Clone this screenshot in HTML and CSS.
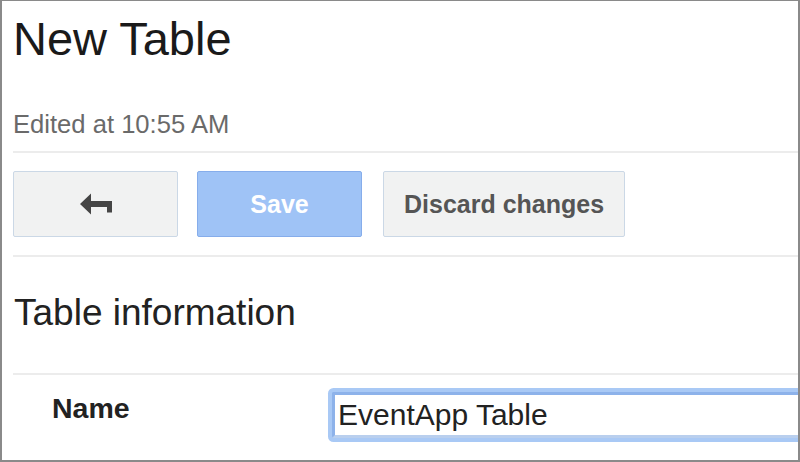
FILE: index.html
```html
<!DOCTYPE html>
<html>
<head>
<meta charset="utf-8">
<link rel="stylesheet" href="styles.css">
</head>
<body>
<div class="frame">
  <h1 class="title">New Table</h1>
  <div class="edited">Edited at 10:55 AM</div>
  <div class="rule"></div>
  <div class="toolbar">
    <button class="btn btn-back" aria-label="Back">
      <svg width="33" height="22" viewBox="0 0 33 22"><path d="M0 11 L11 0.5 L11 8 L32 8 L32 19.5 L27 19.5 L27 14 L11 14 L11 21.5 Z" fill="#454545"/></svg>
    </button>
    <button class="btn btn-save">Save</button>
    <button class="btn btn-discard">Discard changes</button>
  </div>
  <div class="rule rule-b"></div>
  <h2 class="section">Table information</h2>
  <div class="rule rule-c"></div>
  <div class="row">
    <div class="label">Name</div>
    <input class="field" type="text" value="EventApp Table">
  </div>
</div>
</body>
</html>
```
FILE: styles.css
```css
html, body {
  margin: 0;
  padding: 0;
  background: #fff;
}
.frame {
  width: 800px;
  height: 462px;
  box-sizing: border-box;
  border: 2px solid #8a8a8a;
  border-top-width: 1px;
  overflow: hidden;
  padding-left: 11px;
  font-family: "Liberation Sans", Arial, sans-serif;
}
.title {
  margin: 11px 0 0 0;
  font-size: 47px;
  line-height: 54px;
  font-weight: normal;
  color: #1a1a1a;
}
.edited {
  margin: 43px 0 0 0;
  font-size: 25.6px;
  line-height: 30px;
  color: #6a6a6a;
}
.rule {
  height: 2px;
  background: #ececec;
  margin-top: 12px;
}
.toolbar {
  display: flex;
  margin-top: 18px;
  height: 66px;
}
.btn {
  box-sizing: border-box;
  height: 66px;
  border: 1px solid #cbd8e6;
  border-radius: 2px;
  background: #f1f2f2;
  font-family: "Liberation Sans", Arial, sans-serif;
  font-weight: bold;
  font-size: 25px;
  color: #555;
  padding: 0;
  margin: 0;
  display: flex;
  align-items: center;
  justify-content: center;
}
.btn-back {
  width: 165px;
}
.btn-back svg {
  display: block;
  margin-left: 1px;
}
.btn-save {
  width: 165px;
  margin-left: 19px;
  background: #9fc3f6;
  border-color: #86adeb;
  color: #fff;
}
.btn-discard {
  margin-left: 21px;
  padding: 0 20px;
}
.rule-b {
  margin-top: 18px;
}
.section {
  margin: 35px 0 0 1px;
  font-size: 37px;
  line-height: 42px;
  font-weight: normal;
  color: #222;
}
.rule-c {
  margin-top: 39px;
}
.row {
  display: flex;
  align-items: flex-start;
  margin-top: 17px;
}
.label {
  margin-left: 39px;
  width: 280px;
  flex: none;
  font-size: 28.5px;
  line-height: 32px;
  font-weight: bold;
  color: #222;
}
.field {
  flex: none;
  box-sizing: border-box;
  width: 600px;
  height: 46px;
  margin: 0;
  border: 3px solid #8db2ea;
  border-bottom-color: #b9cfee;
  border-radius: 2px;
  box-shadow: 0 0 0 4px #a9c9f5;
  padding: 0 0 0 3px;
  font-family: "Liberation Sans", Arial, sans-serif;
  font-size: 30px;
  color: #222;
  background: #fff;
  outline: none;
}
```
